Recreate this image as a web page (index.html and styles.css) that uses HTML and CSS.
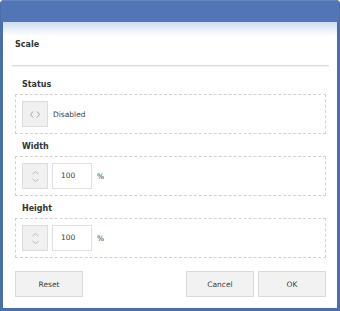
FILE: index.html
```html
<!DOCTYPE html>
<html lang="en">

<head>
    <meta charset="UTF-8">
    <title>Scale</title>
    <link rel="stylesheet" href="styles.css">
</head>

<body>

    <div class="dialog">
        <div class="titlebar"></div>

        <div class="content">
            <h1 class="heading">Scale</h1>
            <div class="separator"></div>

            <div class="field first">
                <div class="label">Status</div>
                <div class="box">
                    <div class="icon-btn">
                        <svg width="10" height="7" viewBox="0 0 10 7">
                            <polyline points="3,0.5 0.5,3.5 3,6.5" />
                            <polyline points="7,0.5 9.5,3.5 7,6.5" />
                        </svg>
                    </div>
                    <span class="value">Disabled</span>
                </div>
            </div>

            <div class="field">
                <div class="label">Width</div>
                <div class="box">
                    <div class="icon-btn spinner">
                        <svg width="7" height="11" viewBox="0 0 7 11">
                            <polyline points="0.5,3 3.5,0.5 6.5,3" />
                            <polyline points="0.5,8 3.5,10.5 6.5,8" />
                        </svg>
                    </div>
                    <div class="input">100</div>
                    <span class="unit">%</span>
                </div>
            </div>

            <div class="field">
                <div class="label">Height</div>
                <div class="box">
                    <div class="icon-btn spinner">
                        <svg width="7" height="11" viewBox="0 0 7 11">
                            <polyline points="0.5,3 3.5,0.5 6.5,3" />
                            <polyline points="0.5,8 3.5,10.5 6.5,8" />
                        </svg>
                    </div>
                    <div class="input">100</div>
                    <span class="unit">%</span>
                </div>
            </div>

            <div class="actions">
                <button class="btn">Reset</button>
                <div class="spacer"></div>
                <button class="btn">Cancel</button>
                <button class="btn">OK</button>
            </div>
        </div>
    </div>

</body>

</html>
```

FILE: styles.css
```css
/* Basic Reset */
* {
    margin: 0;
    padding: 0;
    box-sizing: border-box;
}

body {
    font-family: "DejaVu Sans", Verdana, sans-serif;
    font-size: 7.5px;
    color: #3c3c3c;
    background-color: #fff;
}

/* Window frame */
.dialog {
    width: 340px;
    height: 311px;
    background-color: #4a6dae;
    border-radius: 4px 4px 0 0;
    padding: 0 3px 3px;
    display: flex;
    flex-direction: column;
}

.titlebar {
    height: 22px;
    margin: 0 -2px;
    background-color: #5175b5;
    border-radius: 4px 4px 0 0;
    border-top: 1px solid #6686c0;
}

.content {
    flex: 1;
    background: linear-gradient(#cfdcf0, #ffffff 14px);
}

.heading {
    font-size: 8px;
    font-weight: bold;
    color: #333;
    line-height: 14px;
    padding: 16px 12px 0;
}

.separator {
    height: 2px;
    margin: 13px 8px 0 9px;
    border-top: 1px solid #dedede;
    border-bottom: 1px solid #f2f2f2;
}

/* Fields */
.field {
    margin: 6px 11px 0 12px;
}

.field.first {
    margin-top: 11px;
}

.label {
    font-size: 8px;
    font-weight: bold;
    color: #333;
    line-height: 14px;
    padding-left: 7px;
    margin-bottom: 2px;
}

.box {
    height: 40px;
    border: 1px dashed #d2d2d2;
    padding: 0 6px;
    display: flex;
    align-items: center;
}

.icon-btn {
    width: 26px;
    height: 26px;
    background-color: #f0f0f0;
    border: 1px solid #dcdcdc;
    display: flex;
    align-items: center;
    justify-content: center;
}

.icon-btn svg {
    fill: none;
    stroke: #a0a0a0;
    stroke-width: 1;
}

.spinner svg {
    stroke: #bbbbbb;
}

.value {
    margin-left: 5px;
}

.input {
    width: 40px;
    height: 26px;
    margin-left: 4px;
    border: 1px solid #e0e0e0;
    background-color: #fff;
    line-height: 24px;
    padding-left: 8px;
}

.unit {
    margin-left: 5px;
}

/* Buttons */
.actions {
    display: flex;
    gap: 4px;
    margin: 13px 11px 0 12px;
}

.spacer {
    flex: 1;
}

.btn {
    width: 68px;
    height: 26px;
    background-color: #f2f2f2;
    border: 1px solid #dadada;
    font-family: "DejaVu Sans", Verdana, sans-serif;
    font-size: 7.5px;
    color: #3c3c3c;
}
```
